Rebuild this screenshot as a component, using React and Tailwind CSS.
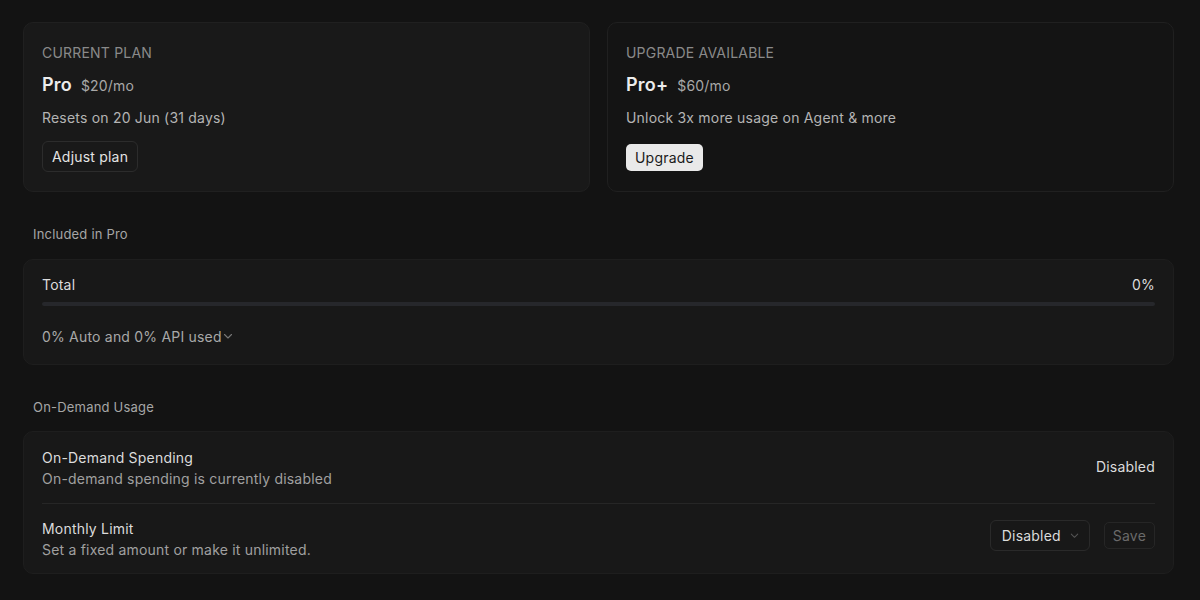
import React from 'react';

function Chevron({ className }) {
  return (
    <svg viewBox="0 0 12 12" className={className} fill="none" stroke="currentColor" strokeWidth="1.1" strokeLinecap="round" strokeLinejoin="round">
      <path d="M2.5 4.5 6 8l3.5-3.5" />
    </svg>
  );
}

function PlanCard({ label, name, price, note, children, dark }) {
  return (
    <div className={`flex-1 rounded-[10px] border border-[#202020] px-[18px] pt-[21px] pb-[19px] ${dark ? 'bg-[#141414]' : 'bg-[#191919]'}`}>
      <div className="text-[14px] leading-[18px] text-[#8a8a8a] uppercase">{label}</div>
      <div className="mt-[9px] flex items-baseline gap-[9px]">
        <span className="text-[18px] font-semibold text-[#ececec]">{name}</span>
        <span className="text-[14px] text-[#a8a8a8]">{price}</span>
      </div>
      <div className="mt-[9px] text-[14px] text-[#b4b4b4]">{note}</div>
      {children}
    </div>
  );
}

export default function App() {
  return (
    <div className="min-h-[600px] bg-[#131313] pl-[23px] pr-[26px] pt-[22px] font-['Inter',sans-serif] tracking-[0.2px] antialiased">
      <div className="flex gap-[17px]">
        <PlanCard label="Current plan" name="Pro" price="$20/mo" note="Resets on 20 Jun (31 days)">
          <button className="mt-[13px] h-[31px] rounded-[6px] border border-[#2c2c2c] px-[9px] text-[14px] text-[#e4e4e4]">
            Adjust plan
          </button>
        </PlanCard>
        <PlanCard dark label="Upgrade available" name="Pro+" price="$60/mo" note="Unlock 3x more usage on Agent & more">
          <button className="mt-[16px] h-[27px] rounded-[5px] bg-[#e9e9e9] px-[9px] text-[14px] text-[#1a1a1a]">
            Upgrade
          </button>
        </PlanCard>
      </div>

      <div className="mt-[33px] pl-[10px] text-[13px] text-[#a6a6a6]">Included in Pro</div>
      <div className="mt-[14px] rounded-[10px] border border-[#1e1e1e] bg-[#181818] px-[18px] pt-[14px] pb-[17px]">
        <div className="flex items-center justify-between text-[14px] text-[#dcdcdc]">
          <span>Total</span>
          <span>0%</span>
        </div>
        <div className="mt-[7px] h-[4px] rounded-full bg-[#26272b]" />
        <button className="mt-[20px] flex items-center text-[14px] text-[#a8a8a8]">
          0% Auto and 0% API used
          <Chevron className="h-[12px] w-[12px] text-[#777]" />
        </button>
      </div>

      <div className="mt-[33px] pl-[10px] text-[13px] text-[#a6a6a6]">On-Demand Usage</div>
      <div className="mt-[14px] rounded-[10px] border border-[#1e1e1e] bg-[#181818] px-[18px]">
        <div className="flex items-center justify-between border-b border-[#262626] pt-[16px] pb-[14px]">
          <div>
            <div className="text-[14px] leading-[20px] text-[#dcdcdc]">On-Demand Spending</div>
            <div className="mt-[1px] text-[14px] leading-[20px] text-[#a0a0a0]">On-demand spending is currently disabled</div>
          </div>
          <span className="mb-[5px] text-[14px] text-[#dcdcdc]">Disabled</span>
        </div>
        <div className="flex items-center justify-between pt-[15px] pb-[13px]">
          <div>
            <div className="text-[14px] leading-[20px] text-[#dcdcdc]">Monthly Limit</div>
            <div className="mt-[1px] text-[14px] leading-[20px] text-[#a0a0a0]">Set a fixed amount or make it unlimited.</div>
          </div>
          <div className="mb-[9px] flex items-center gap-[14px]">
            <button className="flex h-[31px] w-[100px] items-center justify-between rounded-[6px] border border-[#2a2a2a] pl-[11px] pr-[9px] text-[14px] text-[#dcdcdc]">
              Disabled
              <Chevron className="h-[11px] w-[11px] text-[#555]" />
            </button>
            <button className="h-[27px] rounded-[5px] border border-[#262626] px-[8px] text-[14px] text-[#6a6a6a]">
              Save
            </button>
          </div>
        </div>
      </div>
    </div>
  );
}
